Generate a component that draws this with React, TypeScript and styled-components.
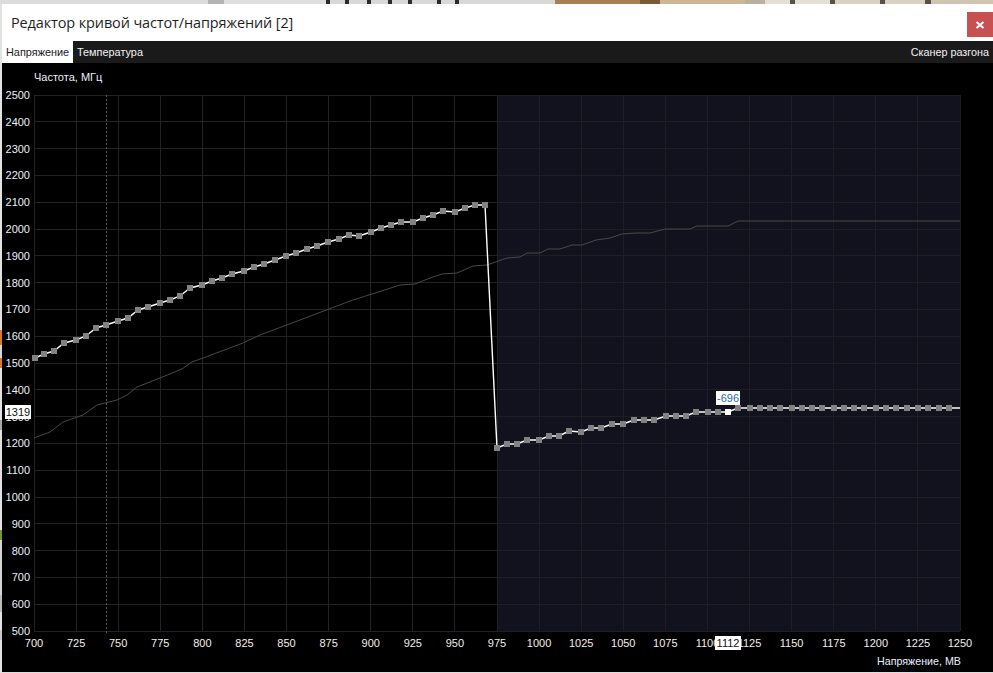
import React from "react";
import styled, { createGlobalStyle } from "styled-components";

const Global = createGlobalStyle`
  html, body { margin: 0; padding: 0; background: #e4e4e4; overflow: hidden; }
  #root { width: 993px; height: 673px; }
`;

const Page = styled.div`
  box-sizing: border-box;
  width: 993px;
  height: 673px;
  padding: 4px 0 1px 2px;
  background:
    linear-gradient(90deg, #dcdcdc 0 208px, #b4b4b4 208px 224px, #dedede 224px 326px, #2c2c2c 326px 330px, #d8d8d8 330px 345px, #2c2c2c 345px 349px, #d8d8d8 349px 367px, #2c2c2c 367px 371px, #d8d8d8 371px 388px, #2c2c2c 388px 392px, #d8d8d8 392px 408px, #2c2c2c 408px 412px, #d8d8d8 412px 437px, #2c2c2c 437px 441px, #d8d8d8 441px 455px, #2c2c2c 455px 459px, #d8d8d8 459px 555px, #a97f52 555px 640px, #7b5a38 640px 660px, #cbb795 660px 745px, #b9b0a0 745px 765px, #e4dfd4 765px 790px, #55524c 790px 795px, #e4dfd4 795px 830px, #55524c 830px 835px, #d9d2c2 835px 880px, #55524c 880px 885px, #d9d2c2 885px 925px, #55524c 925px 931px, #cfc5b0 931px 993px) top left / 100% 4px no-repeat,
    linear-gradient(180deg, #e2e2e2 0 330px, #e07a1e 330px 345px, #d8d8d8 345px 358px, #e07a1e 358px 368px, #e2e2e2 368px 420px, #a8a8a8 420px 430px, #e2e2e2 430px 530px, #6d9a3a 530px 540px, #d4d4d4 540px 595px, #bdbdbd 595px 612px, #e2e2e2 612px 630px, #c8c8c8 630px 640px, #e2e2e2 640px) top left / 2px 100% no-repeat,
    #dedede;
`;

const Win = styled.div`
  display: flex;
  flex-direction: column;
  width: 991px;
  height: 668px;
  background: #000;
`;

const TitleBar = styled.header`
  display: flex;
  justify-content: space-between;
  height: 37px;
  background: #fff;
`;

const Title = styled.h1`
  margin: 0;
  padding: 10px 0 0 9px;
  font: 400 14.45px/18px "Open Sans", "Noto Sans", sans-serif;
  letter-spacing: -0.1px;
  color: #1e1e1e;
`;

const CloseButton = styled.button`
  display: flex;
  align-items: center;
  justify-content: center;
  width: 26px;
  height: 25px;
  margin-top: 8px;
  padding: 0;
  border: 0;
  background: #c75050;
`;

const TabBar = styled.nav`
  display: flex;
  height: 22px;
  background: #1a1a1a;
  font: 400 10.9px/22px "Liberation Sans", Arial, sans-serif;
`;

const Tab = styled.div<{ $active?: boolean }>`
  padding: 0 4px;
  width: ${(p) => (p.$active ? "71px" : "auto")};
  box-sizing: border-box;
  background: ${(p) => (p.$active ? "#fff" : "transparent")};
  color: ${(p) => (p.$active ? "#1a1a1a" : "#f2f2f2")};
`;

const RightTab = styled(Tab)`
  margin-left: auto;
  font-size: 10.8px;
`;

const ChartArea = styled.main`
  display: flex;
  flex-direction: column;
  flex: 1;
  min-height: 0;
  font-family: "Liberation Sans", Arial, sans-serif;
`;

const FreqTitle = styled.div`
  height: 23px;
  padding-left: 32px;
  font-size: 11px;
  line-height: 29px;
  color: #e8f0ff;
  box-sizing: border-box;
`;

const Plot = styled.svg`
  display: block;
  width: 991px;
  height: 566px;
  flex: none;
`;

const VoltTitle = styled.div`
  height: 19px;
  padding-right: 32px;
  text-align: right;
  font-size: 10.7px;
  line-height: 18px;
  color: #e8f0ff;
  box-sizing: border-box;
`;

const X0 = 34;
const X1 = 960;
const Y0 = 95;
const Y1 = 631;
const SPLIT = 497;
const xStep = (X1 - X0) / 22;
const yStep = (Y1 - Y0) / 20;

const yTicks = Array.from({ length: 21 }, (_, i) => ({ v: 2500 - i * 100, y: Y0 + i * yStep }));
const xTicks = Array.from({ length: 23 }, (_, i) => ({ v: 700 + i * 25, x: X0 + i * xStep }));

const curve: [number, number][] = [
  [35, 358], [44, 354], [54, 351], [64, 343], [76, 340], [86, 336], [96, 328], [106, 325], [118, 321], [128, 318],
  [138, 310], [148, 307], [160, 303], [170, 300], [180, 296], [190, 288], [202, 285], [212, 281], [222, 278], [232, 274],
  [244, 271], [254, 267], [264, 264], [275, 260], [286, 256], [296, 253], [307, 249], [317, 246], [328, 242], [339, 239],
  [349, 235], [359, 236], [371, 232], [381, 228], [391, 225], [401, 222], [413, 222], [423, 218], [433, 215], [443, 211],
  [455, 212], [465, 208], [475, 205], [485, 205],
  [497, 448], [507, 444], [517, 444], [527, 440], [539, 440], [549, 436], [559, 436], [569, 431], [581, 432], [591, 428],
  [601, 428], [612, 424], [623, 424], [634, 420], [644, 420], [654, 420], [666, 416], [676, 416], [686, 416], [696, 412],
  [708, 412], [718, 412], [728, 412], [738, 408], [750, 408], [760, 408], [770, 408], [780, 408], [792, 408], [802, 408],
  [812, 408], [822, 408], [834, 408], [844, 408], [854, 408], [864, 408], [876, 408], [886, 408], [896, 408], [907, 408],
  [918, 408], [928, 408], [939, 408], [949, 408],
];

const faint: [number, number][] = [
  [34, 438], [50, 432], [63, 422], [83, 415], [97, 405], [117, 400], [127, 395], [137, 387], [160, 378], [182, 369],
  [192, 362], [203, 358], [243, 343], [260, 335], [300, 320], [350, 301], [372, 294], [400, 285], [415, 284], [430, 278],
  [442, 274], [457, 273], [473, 266], [487, 265], [507, 258], [520, 257], [527, 253], [540, 253], [548, 249], [560, 249],
  [572, 245], [582, 245], [596, 240], [610, 238], [622, 234], [636, 233], [650, 233], [665, 229], [690, 229], [697, 226],
  [728, 226], [738, 221], [960, 221],
];

const toPoints = (pts: [number, number][]) => pts.map((p) => p.join(",")).join(" ");

export default function App() {
  const line = [...curve, [960, 408] as [number, number]];
  return (
    <Page>
      <Global />
      <Win>
        <TitleBar>
          <Title>Редактор кривой частот/напряжений [2]</Title>
          <CloseButton aria-label="Закрыть">
            <svg width="10" height="10" viewBox="0 0 10 10">
              <path d="M1.5 2 L8.5 8 M8.5 2 L1.5 8" stroke="#fff" strokeWidth="2" fill="none" />
            </svg>
          </CloseButton>
        </TitleBar>
        <TabBar>
          <Tab $active>Напряжение</Tab>
          <Tab>Температура</Tab>
          <RightTab>Сканер разгона</RightTab>
        </TabBar>
        <ChartArea>
          <FreqTitle>Частота, МГц</FreqTitle>
          <Plot viewBox="2 86 991 566">
            <rect x={SPLIT} y={Y0} width={X1 - SPLIT} height={Y1 - Y0} fill="#12121f" />
            <g strokeWidth="1" shapeRendering="crispEdges">
              {yTicks.map((t) => (
                <g key={t.v}>
                  <line x1={X0} x2={SPLIT} y1={t.y} y2={t.y} stroke="#222222" />
                  <line x1={SPLIT} x2={X1} y1={t.y} y2={t.y} stroke="#1e1e25" />
                </g>
              ))}
              {xTicks.map((t) => (
                <line key={t.v} x1={t.x} x2={t.x} y1={Y0} y2={Y1} stroke={t.x > SPLIT ? "#1e1e25" : "#222222"} />
              ))}
            </g>
            <line x1={106.5} x2={106.5} y1={Y0} y2={633} stroke="#5a5a5a" strokeDasharray="2 2" shapeRendering="crispEdges" />
            <polyline points={toPoints(faint)} fill="none" stroke="#484848" strokeWidth="1" />
            <polyline points={toPoints(line)} fill="none" stroke="#fff" strokeWidth="1.4" />
            <g fill="#828282" shapeRendering="crispEdges">
              {curve.map(([x, y]) => (
                <rect key={x} x={x - 3} y={y - 3} width={6} height={6} fill={x === 728 ? "#fff" : undefined} />
              ))}
            </g>
            <g fontSize="11" fill="#eaf0f8" textAnchor="end">
              {yTicks.map((t) => (
                <text key={t.v} x={30} y={t.y + 4}>{t.v}</text>
              ))}
            </g>
            <g fontSize="11" fill="#f2efe8" textAnchor="middle">
              {xTicks.map((t) => (
                <text key={t.v} x={t.x} y={647}>{t.v}</text>
              ))}
            </g>
            <rect x={5} y={405} width={26} height={14} fill="#fff" />
            <text x={18} y={416} fontSize="11" fill="#111" textAnchor="middle">1319</text>
            <rect x={715} y={636} width={26} height={14} fill="#fff" />
            <text x={728} y={647} fontSize="11" fill="#111" textAnchor="middle">1112</text>
            <rect x={716} y={391} width={24} height={14} fill="#fff" />
            <text x={728} y={402} fontSize="11" fill="#1f6fa8" textAnchor="middle">-696</text>
          </Plot>
          <VoltTitle>Напряжение, МВ</VoltTitle>
        </ChartArea>
      </Win>
    </Page>
  );
}
